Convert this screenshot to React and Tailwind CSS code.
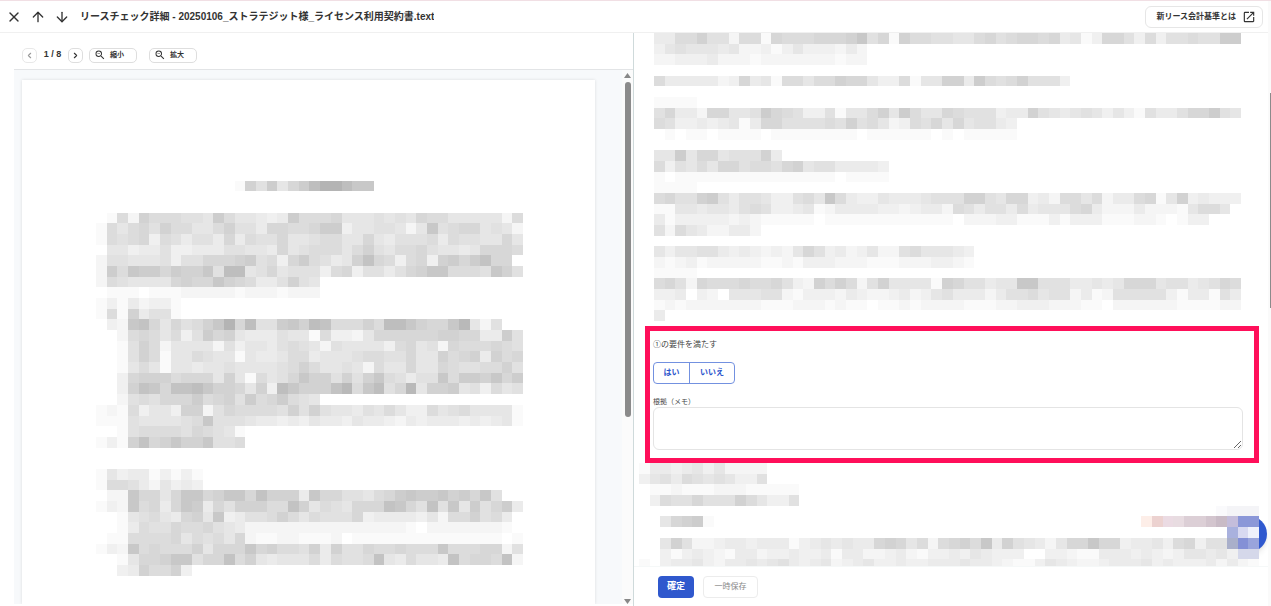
import { X, ArrowUp, ArrowDown, ChevronLeft, ChevronRight } from "lucide-react";
import { MdOpenInNew, MdZoomOut } from "react-icons/md";

// one character per cell: hex digit = grey level, g-y = tint, "." = empty
const TINTS = {
  g: "#fdeee8", h: "#ecd2d0", i: "#ebdbe3", j: "#e8dce1", k: "#dccfd6", l: "#d3c5ce",
  m: "#c9bbc6", o: "#c4bddb", p: "#8b97d8", q: "#a9b1de", r: "#d8d9f1", s: "#eef0fb",
  t: "#a9afca", u: "#8490d6", v: "#99a4dc", w: "#d5d8ea", x: "#fafafc", y: "#f4f4f7",
};

const CONTRACT = [
  "",
  ".............196a58adffdbb",
  "",
  "",
  ".1729777665a755434a777855565658775555527",
  "175786977557966488778aa35566525b67885652",
  "1767837646648476685567755854666747665585",
  "0553446334446655485677757965778655458887",
  "26655563668889a6738a76459c8737839a8ac880",
  "2a7baa8a99b6dd56856663783664689bb7776b96",
  "27655558988b987446965",
  "011101112222212221222",
  "13142331",
  "17194661",
  "032bc858679bf8d66ab9dc77797ddb988be526",
  "..27875736a895444655173325888888998844a6",
  "..16972555526355467652655553785628777876",
  "..16971557655154457745556776685597894978",
  "..15751554556555567975565275585587667796",
  "..38999788859517568b996969b76466b7aa9b8a",
  "..39cb8ccdb998593db999ce7bd68e599a563756",
  "..2676888a7896a78a7650",
  "1217355399268777769696554657533756755551",
  "1116555567b66654434354435443243444343451",
  "..167777687651",
  "1319c89b99b667",
  "",
  "",
  "1534413131",
  "1776425343",
  "022b8858bb89bb8c9994b8866578abaab9a8b6",
  "132b7848ba48699977c95765888cb86c6b5a68a4",
  "..156754895b346679757666834444352779674",
  "..1476687786542222222222222221022222221",
  "0117777857675821122111201111111111111101",
  "132b7877795888b89776949668778777b7778826",
  "..15889bb688c7954555747667c547554c7887c2",
  "..3497793",
];

const CLAUSES = [
  "4477966277187778889b681977665578678878451388637366766a",
  "35655545223135333242",
  "22333422212222222122",
  "",
  "744444238451775779885337155994a76796663",
  "",
  "1111",
  "6844288556a876336155795a7558766634496545653531644688a65",
  "7633434514886666769675237685856643",
  "0101101111011111111011111101011111",
  "",
  "55a588566694",
  "7365758867768956644443",
  "1011111111111111101111",
  "1111",
  "78669a6466533675b74335444566699658834277572447815934333",
  "115545546763345124444332344276466474555784222422215775",
  "4133333232111110111111111111022233111313331112210133",
  "6275422442",
  "",
  "535566434323258634235226755543",
  "212312222211213332221112223321",
  "1111",
  "7862877787786329797269555519866455bb6664454588856645687",
  "3340320555662133324322342356444246675662412666663144164",
  "1212222222111222121101121222211122333222110222222111122",
  "4",
].map((row, i) => (i === 0 ? row.padEnd(55, "a") : row));

const QUESTIONS = [
  "144345352222",
  "356476565336",
  ".11211122211111",
  ".37668666975336",
  "......................................................xyyy",
  "..589a1........................................ghijkklmopp",
  ".......................................................qrs",
  "..596223443444134545448985727897b4965425 88b88344537836 6tuv".replaceAll(" ", ""),
  "..313432144233433414422342133435433300332114443432355453ww",
  "1.34453244545643452345334334445443211354322344453433342421",
];

function Mosaic({ rows, cols, label, className = "" }) {
  return (
    <svg
      role="img"
      aria-label={label}
      viewBox={`0 0 ${cols} ${rows.length}`}
      shapeRendering="crispEdges"
      className={`block w-full h-auto ${className}`}
    >
      {rows.map((row, y) =>
        [...row].slice(0, cols).map((c, x) => {
          if (c === ".") return null;
          const v = 255 - parseInt(c, 16) * 5;
          return <rect key={`${x}-${y}`} x={x} y={y} width="1" height="1" fill={TINTS[c] ?? `rgb(${v},${v},${v})`} />;
        })
      )}
    </svg>
  );
}

function IconButton({ label, children }) {
  return (
    <button aria-label={label} className="flex size-4 items-center justify-center text-[#333]">
      {children}
    </button>
  );
}

function ZoomButton({ children }) {
  return (
    <button className="flex h-[15px] w-12 items-center gap-1 rounded-[5px] border border-[#dedede] bg-white pl-1 text-[7px] font-bold">
      <MdZoomOut size={12} />
      {children}
    </button>
  );
}

function DocumentPanel() {
  return (
    <section className="flex w-1/2 min-w-0 flex-col border-r border-[#cfdadb] pb-0.5 pl-3.5">
      <div className="flex h-[37px] shrink-0 items-center border-b border-[#e2e4e6] pl-2 pt-2 text-[#333]">
        <button aria-label="前のページ" className="flex size-[15px] items-center justify-center rounded-[5px] border border-[#e8e8e8] text-[#999]">
          <ChevronLeft size={9} strokeWidth={3} />
        </button>
        <span className="w-[31px] text-center text-[9px] font-bold">1 / 8</span>
        <button aria-label="次のページ" className="flex size-[15px] items-center justify-center rounded-[5px] border border-[#dedede]">
          <ChevronRight size={9} strokeWidth={3} />
        </button>
        <div className="ml-1.5 flex gap-3">
          <ZoomButton>縮小</ZoomButton>
          <ZoomButton>拡大</ZoomButton>
        </div>
      </div>
      <div className="flex min-h-0 flex-1 bg-[#f7f9fb]">
        <div className="min-w-0 flex-1 overflow-hidden pl-2 pr-[27px] pt-2.5">
          <div className="min-h-full bg-white pl-[74px] pr-[72px] pt-[90px] shadow-[0_0_3px_rgba(0,0,0,0.12)]">
            <Mosaic rows={CONTRACT} cols={40} label="契約書" />
          </div>
        </div>
        <div className="flex w-[11px] flex-col items-center bg-[#fbfbfb] pt-[3px]">
          <svg width="7" height="5" viewBox="0 0 7 5"><path d="M3.5 0 7 5H0z" fill="#888" /></svg>
          <div className="mt-1 h-[63%] w-1.5 rounded-full bg-[#8b8b8b]" />
          <svg className="mt-auto" width="7" height="5" viewBox="0 0 7 5"><path d="M0 0h7L3.5 5z" fill="#888" /></svg>
        </div>
      </div>
    </section>
  );
}

function RequirementForm() {
  return (
    <form className="ml-[11px] mr-[9px] mt-[5px] border-5 border-[#ff0f5a] pb-2 pl-[3px] pr-[11px] pt-2 text-[#444]">
      <p className="text-[8px] leading-3">①の要件を満たす</p>
      <div className="mt-[11px] inline-flex h-[22px] rounded border border-[#7391e0] text-[8px] font-bold text-[#2d55cc]">
        <button type="button" className="w-9 border-r border-[#7391e0]">はい</button>
        <button type="button" className="w-11">いいえ</button>
      </div>
      <label htmlFor="memo" className="mt-3 block text-[7px] leading-[11px]">根拠（メモ）</label>
      <textarea id="memo" className="block h-[43px] w-full resize-y rounded-md border border-[#e4e4e4] bg-white p-1.5 text-[8px] outline-none" />
    </form>
  );
}

function CheckPanel() {
  return (
    <section className="flex w-1/2 min-w-0 flex-col">
      <div className="min-h-0 flex-1 overflow-hidden">
        <div className="pl-5 pr-[27px]">
          <Mosaic rows={CLAUSES} cols={55} label="条項" />
        </div>
        <RequirementForm />
        <div className="relative ml-[5px] mr-[9px]">
          <button aria-label="ヘルプ" className="absolute -right-2 top-[53px] size-9 rounded-full bg-[#3059cf] shadow-md" />
          <Mosaic rows={QUESTIONS} cols={58} label="設問" className="pointer-events-none relative" />
        </div>
      </div>
      <footer className="flex h-10 shrink-0 items-center gap-[9px] border-t border-[#f5f8f8] pl-6 text-[8px]">
        <button className="h-[22px] w-9 rounded bg-[#2f58cd] text-[9px] font-bold text-white">確定</button>
        <button className="h-[22px] w-[55px] rounded border border-[#ececec] text-[#888]">一時保存</button>
      </footer>
    </section>
  );
}

export default function App() {
  return (
    <div
      lang="ja"
      className="flex h-screen overflow-hidden border-t border-[#f1dfe4] bg-white font-['Liberation_Sans','Noto_Sans_CJK_JP',sans-serif]"
    >
      <div className="flex min-w-0 flex-1 flex-col">
        <header className="flex h-8 shrink-0 items-center border-b border-[#f0f0f0] pl-1.5 pr-[5px]">
          <div className="flex gap-2">
            <IconButton label="閉じる"><X size={16} strokeWidth={2} /></IconButton>
            <IconButton label="前へ"><ArrowUp size={16} strokeWidth={2} /></IconButton>
            <IconButton label="次へ"><ArrowDown size={16} strokeWidth={2} /></IconButton>
          </div>
          <h1 className="ml-2.5 truncate text-[10px] font-bold text-[#333]">
            リースチェック詳細 - 20250106_ストラテジット様_ライセンス利用契約書.text
          </h1>
          <a href="#standard" className="ml-auto flex h-[22px] shrink-0 items-center gap-1.5 rounded-md border border-[#e6e6e6] pl-2.5 pr-1.5 text-[8px] font-bold text-[#333]">
            新リース会計基準とは
            <MdOpenInNew size={14} />
          </a>
        </header>
        <main className="flex min-h-0 flex-1">
          <DocumentPanel />
          <CheckPanel />
        </main>
      </div>
      <div className="flex w-[3px] flex-col items-end bg-[#fafafa] pt-[92px]">
        <div className="h-[42%] w-px bg-[#8b8b8b]" />
      </div>
    </div>
  );
}
